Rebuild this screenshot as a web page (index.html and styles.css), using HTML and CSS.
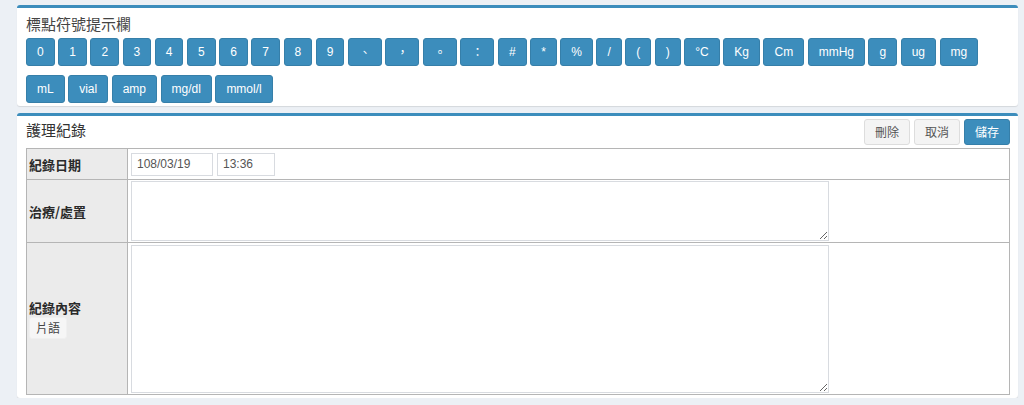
FILE: index.html
```html
<!DOCTYPE html>
<html lang="zh-Hant">
<head>
<meta charset="utf-8">
<title>護理紀錄</title>
<link rel="stylesheet" href="styles.css">
</head>
<body>
<div class="page">
  <section class="box box-symbols">
    <h3 class="box-title">標點符號提示欄</h3>
    <div class="symbols">
      <button class="sym">0</button><button class="sym">1</button><button class="sym">2</button><button class="sym">3</button><button class="sym">4</button><button class="sym">5</button><button class="sym">6</button><button class="sym">7</button><button class="sym">8</button><button class="sym">9</button><button class="sym cjk">、</button><button class="sym cjk">，</button><button class="sym cjk">。</button><button class="sym cjk">：</button><button class="sym">#</button><button class="sym">*</button><button class="sym">%</button><button class="sym">/</button><button class="sym">(</button><button class="sym">)</button><button class="sym">°C</button><button class="sym">Kg</button><button class="sym">Cm</button><button class="sym">mmHg</button><button class="sym">g</button><button class="sym">ug</button><button class="sym">mg</button><button class="sym">mL</button><button class="sym">vial</button><button class="sym">amp</button><button class="sym">mg/dl</button><button class="sym">mmol/l</button>
    </div>
  </section>

  <section class="box box-record">
    <div class="record-header">
      <h3 class="record-title">護理紀錄</h3>
      <div class="actions">
        <button class="btn btn-default">刪除</button>
        <button class="btn btn-default">取消</button>
        <button class="btn btn-primary">儲存</button>
      </div>
    </div>
    <table class="record-table">
      <tr class="row-date">
        <th>紀錄日期</th>
        <td>
          <div class="date-fields">
            <input class="field field-date" type="text" value="108/03/19">
            <input class="field field-time" type="text" value="13:36">
          </div>
        </td>
      </tr>
      <tr class="row-treat">
        <th>治療/處置</th>
        <td><textarea class="area area-treat"></textarea></td>
      </tr>
      <tr class="row-content">
        <th>
          <div class="label-line">紀錄內容</div>
          <button class="btn-xs">片語</button>
        </th>
        <td><textarea class="area area-content"></textarea></td>
      </tr>
    </table>
  </section>
</div>
</body>
</html>
```

FILE: styles.css
```css
* { box-sizing: border-box; }

html, body {
  margin: 0;
  padding: 0;
  background: #ecf0f5;
  font-family: "Liberation Sans", Arial, "Noto Sans CJK TC", sans-serif;
  color: #333;
}

.page {
  padding: 5px 6px 0 17px;
  width: 1024px;
}

.box {
  background: #fff;
  border-top: 3px solid #3c8dbc;
  border-radius: 3px;
  box-shadow: 0 1px 1px rgba(0, 0, 0, 0.1);
  width: 1001px;
}

.box-symbols {
  padding: 6px 8px 3px 9px;
}

.box-title {
  margin: 0 0 4px 0;
  font-size: 15px;
  line-height: 20px;
  font-weight: normal;
  color: #444;
  font-family: "Noto Sans CJK TC", sans-serif;
}

.symbols {
  display: flex;
  flex-wrap: wrap;
  column-gap: 3.5px;
  row-gap: 9px;
  width: 960px;
}

.sym {
  height: 28px;
  padding: 4px 10px;
  font-size: 12px;
  line-height: 18px;
  font-family: "Liberation Sans", Arial, sans-serif;
  color: #fff;
  background: #3c8dbc;
  border: 1px solid #367fa9;
  border-radius: 3px;
  cursor: pointer;
}

.sym.cjk {
  font-family: "Noto Sans CJK TC", sans-serif;
  padding: 4px 10px;
}

.box-record {
  margin-top: 7px;
  padding: 3px 8px 3px 9px;
}

.record-header {
  display: flex;
  justify-content: space-between;
  align-items: flex-start;
  margin-bottom: 3px;
}

.record-title {
  margin: 0;
  font-size: 15px;
  line-height: 22px;
  font-weight: normal;
  color: #333;
  font-family: "Noto Sans CJK TC", sans-serif;
}

.actions {
  display: flex;
  gap: 4px;
}

.btn {
  height: 26px;
  padding: 3px 10px;
  font-size: 12px;
  line-height: 18px;
  font-family: "Noto Sans CJK TC", sans-serif;
  border-radius: 3px;
  border: 1px solid #ddd;
  cursor: pointer;
}

.btn-default {
  background: #f4f4f4;
  color: #555;
}

.btn-primary {
  background: #3c8dbc;
  border-color: #367fa9;
  color: #fff;
}

.record-table {
  width: 984px;
  border-collapse: collapse;
  border: 1px solid #b5b5b5;
}

.record-table th,
.record-table td {
  border: 1px solid #b5b5b5;
}

.record-table th {
  width: 101px;
  background: #ebebeb;
  text-align: left;
  font-size: 13px;
  font-weight: bold;
  color: #2a2a2a;
  padding: 0 2px;
  vertical-align: middle;
  font-family: "Noto Sans CJK TC", sans-serif;
}

.record-table td {
  padding: 1px 3px;
  vertical-align: top;
}

.row-date { height: 31px; }
.row-treat { height: 63px; }
.row-content { height: 152px; }

.row-date td {
  vertical-align: middle;
}

.date-fields {
  display: flex;
  gap: 4px;
}

.field {
  height: 23px;
  padding: 2px 5px;
  font-size: 12px;
  font-family: "Liberation Sans", Arial, sans-serif;
  color: #555;
  border: 1px solid #d8dbe0;
  background: #fff;
  outline: none;
}

.field-date { width: 82px; }
.field-time { width: 58px; }

.area {
  display: block;
  width: 698px;
  border: 1px solid #d8dbe0;
  background: #fff;
  margin: 0;
  padding: 2px 5px;
  outline: none;
}

.area-treat { height: 60px; }
.area-content { height: 148px; margin-top: 1px; }

.label-line {
  line-height: 18px;
}

.btn-xs {
  display: block;
  margin: 0;
  height: 22px;
  padding: 1px 6px;
  font-size: 12px;
  line-height: 18px;
  font-weight: normal;
  font-family: "Noto Sans CJK TC", sans-serif;
  color: #444;
  background: #f6f6f6;
  border: 1px solid #f0f0f0;
  border-radius: 3px;
}
```
